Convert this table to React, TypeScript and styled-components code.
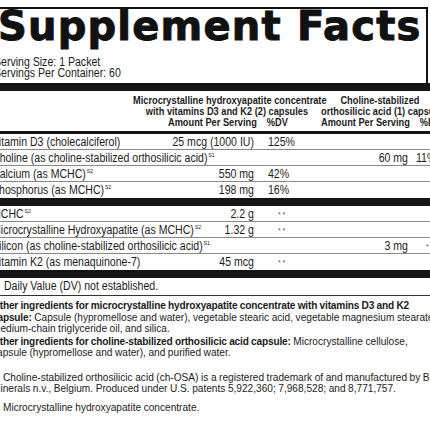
import React from "react";
import styled, { createGlobalStyle } from "styled-components";

// No condensed face is installed, so the label copy is set in Liberation Sans
// and squeezed horizontally, the way the printed label's condensed type reads.
const SQUEEZE = 0.88;
const sx = (px: number) => px / SQUEEZE;

const GlobalStyle = createGlobalStyle`
  html, body {
    margin: 0;
    padding: 0;
    background: #ffffff;
  }
`;

const Viewport = styled.div`
  width: 430px;
  height: 430px;
  overflow: hidden;
  background: #ffffff;
`;

const Label = styled.div`
  width: 447px;
  margin-left: -8px;
  padding-top: 7px;
  font-family: "Liberation Sans", Arial, sans-serif;
  font-size: 12px;
  color: #1c1c1c;
`;

const TitleBox = styled.div`
  width: 434px;
  border-top: 2px solid #111;
  border-right: 2px solid #111;
`;

const Title = styled.h1`
  margin: 0;
  padding: 1px 0 0 6px;
  font-family: "DejaVu Sans", "Liberation Sans", sans-serif;
  font-weight: 700;
  font-size: 40px;
  line-height: 32px;
  letter-spacing: 1.2px;
  color: #111;
  -webkit-text-stroke: 1px #111;
  white-space: nowrap;
`;

const Squeezed = styled.div<{ $w: number }>`
  width: ${(p) => sx(p.$w)}px;
  transform: scaleX(${SQUEEZE});
  transform-origin: 0 0;
`;

const Serving = styled.div`
  margin-top: 15px;
  padding: 0 0 4px ${sx(2)}px;
  line-height: 11px;
  font-size: 12px;
  white-space: nowrap;
`;

const Bar = styled.div<{ $h?: number }>`
  height: ${(p) => p.$h ?? 8}px;
  background: #141414;
`;

const Header = styled.div`
  display: flex;
  padding: 4px 0 3px ${sx(141)}px;
  border-bottom: 3px solid #141414;
  font-weight: 700;
  font-size: 10.5px;
  line-height: 11px;
  white-space: nowrap;
`;

const Group = styled.div<{ $w: number }>`
  width: ${(p) => sx(p.$w)}px;
  flex-shrink: 0;
  text-align: center;
`;

const HeadLine = styled.div<{ $pad: number }>`
  display: flex;
  gap: ${sx(10)}px;
  padding-left: ${(p) => sx(p.$pad)}px;
`;

const Row = styled.div`
  display: grid;
  grid-template-columns: ${sx(190)}px ${sx(72)}px ${sx(66)}px ${sx(88)}px 1fr;
  height: 16px;
  line-height: 16px;
  border-bottom: 1px solid #8a8a8a;
  white-space: nowrap;
  box-sizing: border-box;

  &:last-child {
    border-bottom: none;
  }
`;

const Name = styled.div`
  overflow: visible;
`;

const Amount = styled.div`
  display: flex;
  justify-content: flex-end;
`;

const Dv = styled.div<{ $pad: number }>`
  padding-left: ${(p) => sx(p.$pad)}px;
`;

const Stars = styled.span`
  font-size: 8px;
  letter-spacing: 2px;
  color: #555;
  vertical-align: 1px;
`;

const Sup = styled.span`
  font-size: 6px;
  line-height: 0;
  vertical-align: 5px;
  margin-left: 1px;
`;

const Note = styled.div`
  height: 18px;
  line-height: 17px;
  border-bottom: 1px solid #333;
  box-sizing: border-box;
`;

const Text = styled.p<{ $top: number }>`
  margin: ${(p) => p.$top}px 0 0;
  font-size: 11.5px;
  line-height: 11.5px;
  word-spacing: -0.3px;
  color: #1c1c1c;
  white-space: nowrap;

  b {
    font-weight: 700;
    letter-spacing: -0.2px;
  }
`;

type Item = {
  name: string;
  sup?: string;
  amt1?: string;
  dv1?: string;
  amt2?: string;
  dv2?: string;
};

const groupA: Item[] = [
  { name: "Vitamin D3 (cholecalciferol)", amt1: "25 mcg (1000 IU)", dv1: "125%" },
  { name: "Choline (as choline-stabilized orthosilicic acid)", sup: "S1", amt2: "60 mg", dv2: "11%" },
  { name: "Calcium (as MCHC)", sup: "S2", amt1: "550 mg", dv1: "42%" },
  { name: "Phosphorus (as MCHC)", sup: "S2", amt1: "198 mg", dv1: "16%" },
];

const groupB: Item[] = [
  { name: "MCHC", sup: "S2", amt1: "2.2 g", dv1: "**" },
  { name: "Microcrystalline Hydroxyapatite (as MCHC)", sup: "S2", amt1: "1.32 g", dv1: "**" },
  { name: "Silicon (as choline-stabilized orthosilicic acid)", sup: "S1", amt2: "3 mg", dv2: "**" },
  { name: "Vitamin K2 (as menaquinone-7)", amt1: "45 mcg", dv1: "**" },
];

const DvCell = ({ value, pad }: { value?: string; pad: number }) =>
  value === "**" ? (
    <Dv $pad={pad + 10}>
      <Stars>**</Stars>
    </Dv>
  ) : (
    <Dv $pad={pad}>{value}</Dv>
  );

const Rows = ({ items }: { items: Item[] }) => (
  <div>
    {items.map((it) => (
      <Row key={it.name}>
        <Name>
          {it.name}
          {it.sup && <Sup>{it.sup}</Sup>}
        </Name>
        <Amount>{it.amt1}</Amount>
        <DvCell value={it.dv1} pad={14} />
        <Amount>{it.amt2}</Amount>
        <DvCell value={it.dv2} pad={8} />
      </Row>
    ))}
  </div>
);

export default function App() {
  return (
    <Viewport>
      <GlobalStyle />
      <Label>
        <TitleBox>
          <Title>Supplement Facts</Title>
          <Squeezed $w={434}>
            <Serving>
              Serving Size: 1 Packet
              <br />
              Servings Per Container: 60
            </Serving>
          </Squeezed>
        </TitleBox>
        <Bar />
        <Squeezed $w={447}>
          <Header>
            <Group $w={188}>
              <div>Microcrystalline hydroxyapatite concentrate</div>
              <div>with vitamins D3 and K2 (2) capsules</div>
              <HeadLine $pad={35}>
                <span>Amount Per Serving</span>
                <span>%DV</span>
              </HeadLine>
            </Group>
            <Group $w={118}>
              <div>Choline-stabilized</div>
              <div>orthosilicic acid (1) capsule</div>
              <HeadLine $pad={0}>
                <span>Amount Per Serving</span>
                <span>%DV</span>
              </HeadLine>
            </Group>
          </Header>
          <Rows items={groupA} />
          <Bar />
          <Rows items={groupB} />
          <Bar />
          <Note>
            <Stars>**</Stars> Daily Value (DV) not established.
          </Note>
          <Text $top={4}>
            <b>Other ingredients for microcrystalline hydroxyapatite concentrate with vitamins D3 and K2</b>
            <br />
            <b>capsule:</b> Capsule (hypromellose and water), vegetable stearic acid, vegetable magnesium stearate,
            <br />
            medium-chain triglyceride oil, and silica.
          </Text>
          <Text $top={1}>
            <b>Other ingredients for choline-stabilized orthosilicic acid capsule:</b> Microcrystalline cellulose,
            <br />
            capsule (hypromellose and water), and purified water.
          </Text>
          <Text $top={13}>
            1. Choline-stabilized orthosilicic acid (ch-OSA) is a registered trademark of and manufactured by Bio
            <br />
            Minerals n.v., Belgium. Produced under U.S. patents 5,922,360; 7,968,528; and 8,771,757.
          </Text>
          <Text $top={7}>2. Microcrystalline hydroxyapatite concentrate.</Text>
        </Squeezed>
      </Label>
    </Viewport>
  );
}
